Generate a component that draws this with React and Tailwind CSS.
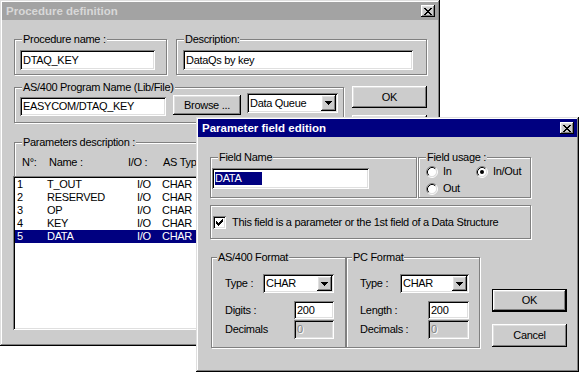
import React from 'react';

const ui = "font-['Liberation_Sans',Arial,sans-serif] text-[11px] leading-[13px] tracking-[-0.3px] text-black";
const frame = 'shadow-[inset_-1px_-1px_#000,inset_1px_1px_#dfdfdf,inset_-2px_-2px_#808080,inset_2px_2px_#fff]';
const raised = 'shadow-[inset_-1px_-1px_#000,inset_1px_1px_#fff,inset_-2px_-2px_#808080,inset_2px_2px_#dfdfdf]';
const sunken = 'shadow-[inset_1px_1px_#808080,inset_-1px_-1px_#fff,inset_2px_2px_#000,inset_-2px_-2px_#dfdfdf]';
const etched = 'border border-[#808080] shadow-[inset_1px_1px_#fff,1px_1px_#fff]';

const CloseGlyph = () => (
  <svg width="8" height="7" viewBox="0 0 8 7" shapeRendering="crispEdges">
    <path
      fill="#000"
      d="M0 0h2v1h-2z M6 0h2v1h-2z M1 1h2v1h-2z M5 1h2v1h-2z M2 2h4v1h-4z M3 3h2v1h-2z M2 4h4v1h-4z M1 5h2v1h-2z M5 5h2v1h-2z M0 6h2v1h-2z M6 6h2v1h-2z"
    />
  </svg>
);

const TitleBar = ({ title, active }) => (
  <div
    className={`h-[18px] flex items-center justify-between pl-[4px] pr-[3px] ${
      active ? 'bg-[#000080] text-white' : 'bg-[#a3a3a3] text-[#d8d8d8]'
    }`}
  >
    <span className="font-bold text-[11.5px] leading-[14px] tracking-normal">{title}</span>
    <div className={`w-[14px] h-[12px] bg-[#cccccc] ${raised} flex items-center justify-center`}>
      <CloseGlyph />
    </div>
  </div>
);

const Group = ({ label, className = '', children }) => (
  <fieldset className={`${etched} ${className}`}>
    {label && <legend className="px-[1px] bg-[#cccccc] leading-[13px]">{label}</legend>}
    {children}
  </fieldset>
);

const Input = ({ children, className = '', disabled }) => (
  <div
    className={`flex items-center pl-[3px] ${sunken} ${
      disabled ? 'bg-[#cccccc] text-[#808080] [text-shadow:1px_1px_#fff]' : 'bg-white'
    } ${className}`}
  >
    {children}
  </div>
);

const Arrow = () => (
  <svg width="7" height="4" viewBox="0 0 7 4" shapeRendering="crispEdges">
    <path fill="#000" d="M0 0h7v1h-1v1h-1v1h-1v1h-1v-1h-1v-1h-1v-1h-1z" />
  </svg>
);

const Combo = ({ value, className = '' }) => (
  <div className={`flex bg-white p-[2px] ${sunken} ${className}`}>
    <span className="flex-1 self-center pl-[1px]">{value}</span>
    <div className={`w-[15px] bg-[#cccccc] ${raised} flex items-center justify-center`}>
      <Arrow />
    </div>
  </div>
);

const Button = ({ children, className = '', isDefault }) =>
  isDefault ? (
    <div className={`border border-black ${className}`}>
      <div className={`w-full h-full bg-[#cccccc] ${raised} flex items-center justify-center`}>{children}</div>
    </div>
  ) : (
    <div className={`bg-[#cccccc] ${raised} flex items-center justify-center ${className}`}>{children}</div>
  );

const Radio = ({ checked }) => (
  <svg width="12" height="12" viewBox="0 0 12 12" className="shrink-0">
    <circle cx="6" cy="6" r="4.5" fill="#fff" />
    <path d="M2.11 9.89A5.5 5.5 0 0 1 9.89 2.11" fill="none" stroke="#808080" />
    <path d="M9.89 2.11A5.5 5.5 0 0 1 2.11 9.89" fill="none" stroke="#fff" />
    <path d="M2.82 9.18A4.5 4.5 0 0 1 9.18 2.82" fill="none" stroke="#000" />
    <path d="M9.18 2.82A4.5 4.5 0 0 1 2.82 9.18" fill="none" stroke="#dfdfdf" />
    {checked && <circle cx="6" cy="6" r="2" fill="#000" />}
  </svg>
);

const Check = () => (
  <div className={`w-[13px] h-[13px] shrink-0 bg-white ${sunken} flex items-center justify-center`}>
    <svg width="7" height="7" viewBox="0 0 7 7" shapeRendering="crispEdges">
      <path
        fill="#000"
        d="M6 0h1v1h-1z M5 1h2v1h-2z M0 2h1v1h-1z M4 2h3v1h-3z M0 3h2v1h-2z M3 3h3v1h-3z M0 4h5v1h-5z M1 5h3v1h-3z M2 6h1v1h-1z"
      />
    </svg>
  </div>
);

const params = [
  { n: 1, name: 'T_OUT', io: 'I/O', type: 'CHAR' },
  { n: 2, name: 'RESERVED', io: 'I/O', type: 'CHAR' },
  { n: 3, name: 'OP', io: 'I/O', type: 'CHAR' },
  { n: 4, name: 'KEY', io: 'I/O', type: 'CHAR' },
  { n: 5, name: 'DATA', io: 'I/O', type: 'CHAR' },
];

const ProcedureWindow = () => (
  <div className={`absolute left-0 top-0 w-[440px] h-[346px] p-[2px] bg-[#cccccc] ${frame}`}>
    <TitleBar title="Procedure definition" />
    <div className="flex flex-col pl-[12px] pt-[13px]">
      {/* Name + description */}
      <div className="flex gap-[9px]">
        <Group label="Procedure name :" className="w-[153px] h-[42px] pl-[7px]">
          <Input className="w-[135px] h-[20px] mt-[4px] -ml-[2px]">DTAQ_KEY</Input>
        </Group>
        <Group label="Description:" className="w-[251px] h-[42px] pl-[7px]">
          <Input className="w-[230px] h-[20px] mt-[4px] -ml-[1px]">DataQs by key</Input>
        </Group>
      </div>

      {/* Program name + buttons */}
      <div className="flex gap-[8px] h-[42px] mt-[6px]">
        <Group label="AS/400 Program Name (Lib/File)" className="w-[330px] h-[42px] pl-[7px]">
          <div className="flex items-start -mt-[1px] -ml-[2px]">
            <Input className="w-[146px] h-[19px] mt-[4px]">EASYCOM/DTAQ_KEY</Input>
            <Button className="w-[68px] h-[20px] mt-[2px] ml-[7px]">Browse ...</Button>
            <Combo value="Data Queue" className="w-[91px] h-[20px] ml-[6px]" />
          </div>
        </Group>
        <div className="flex flex-col">
          <Button className="w-[75px] h-[22px] shrink-0 mt-[5px]">OK</Button>
          <Button className="w-[75px] h-[22px] shrink-0 mt-[7px]">Cancel</Button>
        </div>
      </div>

      {/* Parameters */}
      <Group label="Parameters description :" className="w-[330px] h-[193px] mt-[13px] pl-[7px]">
        <div className="flex h-[13px] mt-[7px]">
          <span className="w-[27px]">N°:</span>
          <span className="w-[79px]">Name :</span>
          <span className="w-[35px]">I/O :</span>
          <span>AS Type</span>
        </div>
        <div className={`relative -ml-[9px] mt-[7px] w-[400px] h-[154px] bg-white p-[2px] ${sunken}`}>
          {params.map((p) => (
            <div
              key={p.n}
              className={`flex h-[13px] items-center pl-[2px] ${p.n === 5 ? 'bg-[#000080] text-white' : ''}`}
            >
              <span className="w-[30px]">{p.n}</span>
              <span className="w-[90px]">{p.name}</span>
              <span className="w-[25px]">{p.io}</span>
              <span>{p.type}</span>
            </div>
          ))}
        </div>
      </Group>
    </div>
  </div>
);

const FieldWindow = () => (
  <div className={`absolute left-[196px] top-[117px] w-[383px] h-[255px] p-[2px] bg-[#cccccc] ${frame}`}>
    <TitleBar title="Parameter field edition" active />
    <div className="flex flex-col pl-[12px] pt-[14px]">
      <div className="flex gap-[1px]">
        <Group label="Field Name" className="w-[207px] h-[47px] pl-[7px]">
          <Input className="w-[157px] h-[21px] mt-[4px] -ml-[6px] pl-[3px]">
            <span className="inline-block w-[47px] h-[13px] bg-[#000080] text-white">DATA</span>
          </Input>
        </Group>
        <Group label="Field usage :" className="w-[113px] h-[47px] pl-[7px]">
          <div className="flex items-center gap-[5px] mt-[1px] h-[13px]">
            <div className="flex items-center gap-[5px] w-[45px]">
              <Radio />
              <span>In</span>
            </div>
            <div className="flex items-center gap-[5px]">
              <Radio checked />
              <span>In/Out</span>
            </div>
          </div>
          <div className="flex items-center gap-[5px] mt-[4px] h-[13px]">
            <Radio />
            <span>Out</span>
          </div>
        </Group>
      </div>

      <div className={`${etched} w-[321px] h-[34px] mt-[7px] flex items-center gap-[6px] pl-[2px]`}>
        <Check />
        <span className="whitespace-nowrap">This field is a parameter or the 1st field of a Data Structure</span>
      </div>

      <div className="flex mt-[12px] ml-[1px]">
        <Group label="AS/400 Format" className="w-[135px] h-[97px] pl-[5px]">
          <div className="flex flex-col pl-[8px]">
            <div className="flex items-center mt-[10px]">
              <span className="w-[38px]">Type :</span>
              <Combo value="CHAR" className="w-[71px] h-[19px]" />
            </div>
            <div className="flex items-center mt-[8px]">
              <span className="w-[69px]">Digits :</span>
              <Input className="w-[40px] h-[18px]">200</Input>
            </div>
            <div className="flex items-center mt-[1px]">
              <span className="w-[69px]">Decimals</span>
              <Input className="w-[40px] h-[19px]" disabled>0</Input>
            </div>
          </div>
        </Group>
        <Group label="PC Format" className="w-[134px] h-[97px] pl-[5px]">
          <div className="flex flex-col pl-[8px]">
            <div className="flex items-center mt-[10px]">
              <span className="w-[40px]">Type :</span>
              <Combo value="CHAR" className="w-[69px] h-[19px]" />
            </div>
            <div className="flex items-center mt-[8px]">
              <span className="w-[68px]">Length :</span>
              <Input className="w-[41px] h-[18px]">200</Input>
            </div>
            <div className="flex items-center mt-[1px]">
              <span className="w-[68px]">Decimals :</span>
              <Input className="w-[41px] h-[19px]" disabled>0</Input>
            </div>
          </div>
        </Group>
        <div className="flex flex-col ml-[12px]">
          <Button isDefault className="w-[75px] h-[23px] mt-[38px]">OK</Button>
          <Button className="w-[75px] h-[23px] mt-[12px]">Cancel</Button>
        </div>
      </div>
    </div>
  </div>
);

export default function App() {
  return (
    <div className={`relative w-[579px] h-[372px] overflow-hidden bg-white ${ui}`}>
      <ProcedureWindow />
      <FieldWindow />
    </div>
  );
}
